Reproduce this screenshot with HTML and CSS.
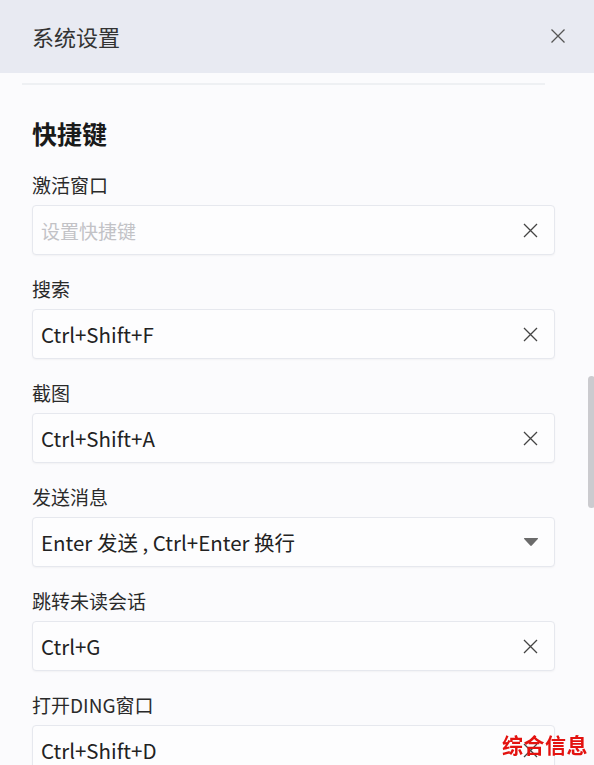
FILE: index.html
```html
<!DOCTYPE html>
<html lang="zh-CN">
<head>
<meta charset="utf-8">
<title>系统设置</title>
<link rel="stylesheet" href="styles.css">
</head>
<body>
<header class="header">
  <span class="header-title">系统设置</span>
  <button class="header-close" aria-label="关闭">
    <svg width="16" height="16" viewBox="0 0 16 16"><path d="M1.5 1.5 L14.5 14.5 M14.5 1.5 L1.5 14.5" stroke="#555" stroke-width="1.3" fill="none"/></svg>
  </button>
</header>
<main class="content">
  <div class="divider"></div>
  <h2 class="section-title">快捷键</h2>

  <div class="field">
    <label class="field-label">激活窗口</label>
    <div class="box">
      <input class="box-input" type="text" placeholder="设置快捷键">
      <span class="clear"><svg width="15" height="15" viewBox="0 0 15 15"><path d="M1 1 L14 14 M14 1 L1 14" stroke="#444" stroke-width="1.3" fill="none"/></svg></span>
    </div>
  </div>

  <div class="field">
    <label class="field-label">搜索</label>
    <div class="box">
      <input class="box-input" type="text" value="Ctrl+Shift+F">
      <span class="clear"><svg width="15" height="15" viewBox="0 0 15 15"><path d="M1 1 L14 14 M14 1 L1 14" stroke="#444" stroke-width="1.3" fill="none"/></svg></span>
    </div>
  </div>

  <div class="field">
    <label class="field-label">截图</label>
    <div class="box">
      <input class="box-input" type="text" value="Ctrl+Shift+A">
      <span class="clear"><svg width="15" height="15" viewBox="0 0 15 15"><path d="M1 1 L14 14 M14 1 L1 14" stroke="#444" stroke-width="1.3" fill="none"/></svg></span>
    </div>
  </div>

  <div class="field">
    <label class="field-label">发送消息</label>
    <div class="box">
      <span class="box-text">Enter 发送 , Ctrl+Enter 换行</span>
      <span class="caret"><svg width="16" height="10" viewBox="0 0 16 10"><path d="M1.5 1 L14.5 1 Q15.5 1 14.8 2 L8.8 8.6 Q8 9.4 7.2 8.6 L1.2 2 Q0.5 1 1.5 1 Z" fill="#6b6b6b"/></svg></span>
    </div>
  </div>

  <div class="field">
    <label class="field-label">跳转未读会话</label>
    <div class="box">
      <input class="box-input" type="text" value="Ctrl+G">
      <span class="clear"><svg width="15" height="15" viewBox="0 0 15 15"><path d="M1 1 L14 14 M14 1 L1 14" stroke="#444" stroke-width="1.3" fill="none"/></svg></span>
    </div>
  </div>

  <div class="field">
    <label class="field-label">打开DING窗口</label>
    <div class="box">
      <input class="box-input" type="text" value="Ctrl+Shift+D">
      <span class="clear"><svg width="15" height="15" viewBox="0 0 15 15"><path d="M1 1 L14 14 M14 1 L1 14" stroke="#444" stroke-width="1.3" fill="none"/></svg></span>
    </div>
  </div>
</main>
<div class="scrollbar"></div>
<div class="watermark">综合信息</div>
</body>
</html>
```

FILE: styles.css
```css
html, body {
  margin: 0;
  padding: 0;
  height: 100%;
  overflow: hidden;
}
body {
  background: #fbfbfd;
  font-family: "Noto Sans CJK SC", "Noto Sans", sans-serif;
  color: #222;
}
.header {
  height: 73px;
  background: #e8eaf2;
  display: flex;
  align-items: center;
  justify-content: space-between;
  padding: 0 28px 0 32px;
  box-sizing: border-box;
}
.header-title {
  font-size: 22px;
  color: #333;
  line-height: 30px;
  margin-top: -2px;
}
.header-close {
  border: none;
  background: transparent;
  padding: 0;
  width: 16px;
  height: 16px;
  display: flex;
  margin-top: -2px;
}
.content {
  padding: 0 39px 0 32px;
}
.divider {
  height: 2px;
  background: #eef0f3;
  margin: 10px 10px 0 -10px;
}
.section-title {
  margin: 32px 0 0 0;
  font-size: 25px;
  line-height: 32px;
  font-weight: 700;
  color: #1a1a1a;
}
.field {
  display: flex;
  flex-direction: column;
  gap: 7px;
  margin-top: 21px;
}
.section-title + .field {
  margin-top: 23px;
}
.field-label {
  font-size: 19px;
  line-height: 26px;
  color: #2a2a2a;
}
.box {
  height: 50px;
  box-sizing: border-box;
  border: 1px solid #e6e8ee;
  border-radius: 4px;
  background: #fdfdfe;
  box-shadow: 0 1px 2px rgba(0, 0, 0, 0.04);
  display: flex;
  align-items: center;
  padding: 0 16px 0 8px;
}
.box-input {
  flex: 1;
  border: none;
  outline: none;
  background: transparent;
  font-family: "Noto Sans CJK SC", "Noto Sans", sans-serif;
  font-size: 20.5px;
  color: #222;
  padding: 0;
  min-width: 0;
}
.box-input::placeholder {
  color: #c2c2c6;
  font-size: 19px;
}
.box-text {
  flex: 1;
  font-size: 20.5px;
  color: #222;
}
.clear {
  display: flex;
  width: 15px;
  height: 15px;
}
.caret {
  display: flex;
  margin-right: -1px;
}
.scrollbar {
  position: fixed;
  left: 588px;
  top: 376px;
  width: 7px;
  height: 132px;
  border-radius: 4px;
  background: #cbcbcf;
}
.watermark {
  position: fixed;
  right: 6px;
  bottom: 6px;
  font-size: 21px;
  font-weight: 700;
  color: #e3120f;
  letter-spacing: 0.5px;
}
```
